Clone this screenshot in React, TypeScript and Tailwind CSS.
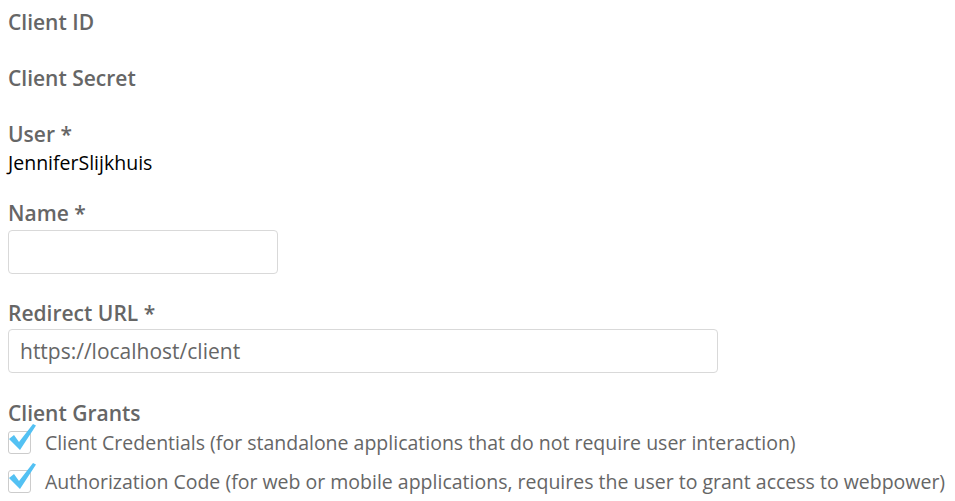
import React from 'react'

const label = 'text-[21px] leading-[30px] font-semibold text-[#666]'

function Check() {
  return (
    <span className="relative inline-block w-[23px] h-[23px] shrink-0">
      <span className="absolute inset-0 border border-[#ccc] rounded-[3px] bg-white" />
      <svg className="absolute -left-[1px] -top-[9px]" width="30" height="30" viewBox="0 0 30 30">
        <path d="M2 17 L7 13 L12 20 L26 2 L29 3.5 L13 28 Z" fill="#53c1f3" />
      </svg>
    </span>
  )
}

export default function App() {
  return (
    <div className="bg-white w-[955px] h-[501px] overflow-hidden pl-2 pt-[7px] font-['Open_Sans',sans-serif]">
      <div className={label}>Client ID</div>
      <div className={label + ' mt-[26px]'}>Client Secret</div>
      <div className={label + ' mt-[26px]'}>User *</div>
      <div className="text-[19.5px] leading-[27px] text-black">JenniferSlijkhuis</div>

      <div className={label + ' mt-[22px]'}>Name *</div>
      <input className="mt-[2px] block w-[270px] h-[44px] border border-[#d9d9d9] rounded-[4px] px-3 text-[21px] text-[#666] outline-none" />

      <div className={label + ' mt-[24px]'}>Redirect URL *</div>
      <input
        className="mt-[1px] block w-[710px] h-[44px] border border-[#d9d9d9] rounded-[4px] px-[11px] text-[21px] text-[#666] outline-none"
        defaultValue="https://localhost/client"
      />

      <div className={label + ' mt-[25px]'}>Client Grants</div>
      <div className="flex flex-col gap-[12px] mt-[1px]">
        <div className="flex items-center gap-[14px] text-[19.5px] leading-[27px] text-[#666]">
          <Check />
          <span>Client Credentials (for standalone applications that do not require user interaction)</span>
        </div>
        <div className="flex items-center gap-[14px] text-[19.5px] leading-[27px] text-[#666]">
          <Check />
          <span>Authorization Code (for web or mobile applications, requires the user to grant access to webpower)</span>
        </div>
      </div>
    </div>
  )
}
